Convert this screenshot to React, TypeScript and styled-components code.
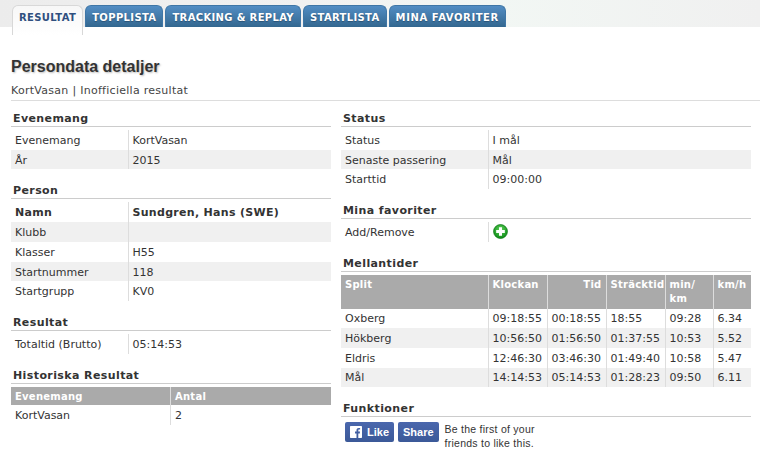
import React from "react";
import styled, { createGlobalStyle } from "styled-components";

const GlobalStyle = createGlobalStyle`
  html, body {
    margin: 0;
    padding: 0;
    background: #fff;
  }
  body {
    width: 760px;
    height: 453px;
    overflow: hidden;
    font-family: "DejaVu Sans", Verdana, sans-serif;
    font-size: 11px;
    color: #333;
  }
`;

const tabs = [
  { label: "Resultat", spacing: 0.35 },
  { label: "Topplista", spacing: 0.35 },
  { label: "Tracking & Replay", spacing: 0.35 },
  { label: "Startlista", spacing: 0.35 },
  { label: "Mina favoriter", spacing: 0.6 },
];

const splits = [
  ["Oxberg", "09:18:55", "00:18:55", "18:55", "09:28", "6.34"],
  ["Hökberg", "10:56:50", "01:56:50", "01:37:55", "10:53", "5.52"],
  ["Eldris", "12:46:30", "03:46:30", "01:49:40", "10:58", "5.47"],
  ["Mål", "14:14:53", "05:14:53", "01:28:23", "09:50", "6.11"],
];

const InfoTable = ({
  rows,
  bold,
  wide,
  short,
}: {
  rows: [string, React.ReactNode][];
  bold?: string;
  wide?: boolean;
  short?: number;
}) => (
  <Info $wide={wide}>
    <tbody>
      {rows.map(([label, value], i) => (
        <InfoRow key={label} $bold={label === bold} $short={i === short}>
          <td>{label}</td>
          <td>{value}</td>
        </InfoRow>
      ))}
    </tbody>
  </Info>
);

const App = () => {
  return (
    <>
      <GlobalStyle />
      <TabBar>
        {tabs.map((t, i) => (
          <Tab key={t.label} $active={i === 0} $spacing={t.spacing}>
            {t.label}
          </Tab>
        ))}
      </TabBar>
      <Header>
        <Title>Persondata detaljer</Title>
        <Crumb>KortVasan | Inofficiella resultat</Crumb>
      </Header>
      <Columns>
        <Column>
          <Section>
            <SectionTitle>Evenemang</SectionTitle>
            <InfoTable
              short={1}
              rows={[
                ["Evenemang", "KortVasan"],
                ["År", "2015"],
              ]}
            />
          </Section>
          <Section>
            <SectionTitle>Person</SectionTitle>
            <InfoTable
              bold="Namn"
              short={3}
              rows={[
                ["Namn", "Sundgren, Hans (SWE)"],
                ["Klubb", ""],
                ["Klasser", "H55"],
                ["Startnummer", "118"],
                ["Startgrupp", "KV0"],
              ]}
            />
          </Section>
          <Section>
            <SectionTitle>Resultat</SectionTitle>
            <InfoTable rows={[["Totaltid (Brutto)", "05:14:53"]]} />
          </Section>
          <Section>
            <SectionTitle>Historiska Resultat</SectionTitle>
            <History>
              <thead>
                <tr>
                  <th>Evenemang</th>
                  <th>Antal</th>
                </tr>
              </thead>
              <tbody>
                <tr>
                  <td>KortVasan</td>
                  <td>2</td>
                </tr>
              </tbody>
            </History>
          </Section>
        </Column>
        <Column $wide>
          <Section>
            <SectionTitle>Status</SectionTitle>
            <InfoTable
              wide
              short={1}
              rows={[
                ["Status", "I mål"],
                ["Senaste passering", "Mål"],
                ["Starttid", "09:00:00"],
              ]}
            />
          </Section>
          <Section>
            <SectionTitle>Mina favoriter</SectionTitle>
            <InfoTable
              wide
              rows={[
                [
                  "Add/Remove",
                  <PlusIcon viewBox="0 0 16 16" aria-label="Add">
                    <defs>
                      <radialGradient id="plusFill" cx="50%" cy="35%" r="65%">
                        <stop offset="0%" stopColor="#5fd35a" />
                        <stop offset="100%" stopColor="#0d8a17" />
                      </radialGradient>
                    </defs>
                    <circle cx="8" cy="8" r="7.4" fill="url(#plusFill)" stroke="#0b7a14" strokeWidth="0.8" />
                    <path d="M6.400 3.400h3.200v3h3v3.200h-3v3H6.400v-3h-3V6.400h3z" fill="#fff" />
                  </PlusIcon>,
                ],
              ]}
            />
          </Section>
          <Section>
            <SectionTitle>Mellantider</SectionTitle>
            <Splits>
              <thead>
                <tr>
                  <th>Split</th>
                  <th>Klockan</th>
                  <RightHead>Tid</RightHead>
                  <th>Sträcktid</th>
                  <th>
                    min/
                    <br />
                    km
                  </th>
                  <th>km/h</th>
                </tr>
              </thead>
              <tbody>
                {splits.map((row) => (
                  <tr key={row[0]}>
                    {row.map((cell, i) => (
                      <td key={i}>{cell}</td>
                    ))}
                  </tr>
                ))}
              </tbody>
            </Splits>
          </Section>
          <Section>
            <SectionTitle>Funktioner</SectionTitle>
            <Social>
              <FbButton>
                <svg width="12" height="12" viewBox="0 0 12 12" aria-hidden="true">
                  <path
                    d="M.7 0h10.600a.7.7 0 0 1 .7.7v10.600a.7.7 0 0 1-.7.7H8.300V7.400h1.500l.2-1.800H8.300V4.500c0-.5.2-.9.9-.9h.9V2c-.2 0-.7-.1-1.300-.1-1.400 0-2.300.8-2.300 2.400v1.300H5v1.800h1.500V12H.7a.7.7 0 0 1-.7-.7V.7A.7.7 0 0 1 .7 0z"
                    fill="#fff"
                  />
                </svg>
                Like
              </FbButton>
              <FbButton>Share</FbButton>
              <FbText>
                Be the first of your
                <br />
                friends to like this.
              </FbText>
            </Social>
          </Section>
        </Column>
      </Columns>
    </>
  );
};

export default App;

const TabBar = styled.div`
  height: 27px;
  box-sizing: border-box;
  padding: 5px 0 0 12px;
  display: flex;
  gap: 2px;
  background: linear-gradient(90deg, #ececec 0%, #f1f1f1 40%, #f2f7f4 65%, #f0f0f0 100%);
`;

const Tab = styled.div<{ $active?: boolean; $spacing: number }>`
  box-sizing: border-box;
  height: ${(p) => (p.$active ? "30px" : "22px")};
  padding: 0 6px;
  line-height: 23px;
  font-size: 10px;
  font-weight: bold;
  text-transform: uppercase;
  letter-spacing: ${(p) => p.$spacing}px;
  border-radius: 6px 6px 0 0;
  color: ${(p) => (p.$active ? "#2f4f7f" : "#fff")};
  background: ${(p) =>
    p.$active ? "linear-gradient(#f7f7f7, #fff)" : "linear-gradient(#528dc4, #33678f)"};
  border: 1px solid ${(p) => (p.$active ? "#d8d8d8" : "#3f76a6")};
  border-bottom: 0;
  text-shadow: ${(p) => (p.$active ? "none" : "0 1px 1px #2a5275")};
`;

const Header = styled.div`
  margin: 31px 0 0 11px;
  padding-bottom: 1px;
  border-bottom: 1px solid #ddd;
`;

const Title = styled.h1`
  margin: 0;
  height: 20px;
  font-family: "Liberation Sans", Arial, sans-serif;
  font-size: 16px;
  line-height: 18px;
  font-weight: bold;
  color: #333;
  text-shadow: 1px 1px 2px #bbb;
`;

const Crumb = styled.div`
  margin-top: 5px;
  line-height: 16px;
  letter-spacing: 0.28px;
  color: #444;
`;

const Columns = styled.div`
  display: flex;
  gap: 10px;
  padding: 9px 9px 0 11px;
`;

const Column = styled.div<{ $wide?: boolean }>`
  width: ${(p) => (p.$wide ? "410px" : "320px")};
  flex: none;
`;

const Section = styled.section`
  margin-bottom: 13px;
`;

const SectionTitle = styled.h3`
  margin: 0 0 3px;
  padding: 1px 0 0 2px;
  height: 15px;
  line-height: 15px;
  font-size: 11px;
  font-weight: bold;
  letter-spacing: 0.4px;
  color: #333;
  border-bottom: 1px solid #ccc;
`;

const Info = styled.table<{ $wide?: boolean }>`
  width: 100%;
  border-collapse: collapse;
  td {
    padding: 1px 4px 0;
    box-sizing: border-box;
  }
  td:first-child {
    width: ${(p) => (p.$wide ? "147px" : "117px")};
    border-right: 1px solid #ddd;
  }
  tr:nth-child(even) {
    background: #f0f0f0;
  }
`;

const InfoRow = styled.tr<{ $bold?: boolean; $short?: boolean }>`
  font-weight: ${(p) => (p.$bold ? "bold" : "normal")};
  letter-spacing: ${(p) => (p.$bold ? "0.3px" : "0")};
  td {
    height: ${(p) => (p.$short ? "19px" : "20px")};
  }
`;

const History = styled.table`
  width: 100%;
  border-collapse: collapse;
  th {
    background: #aaa;
    color: #fff;
    text-align: left;
    height: 18px;
    padding: 0 4px;
    font-size: 10px;
    letter-spacing: 0.25px;
  }
  th:first-child,
  td:first-child {
    width: 151px;
    border-right: 1px solid #ddd;
  }
  td {
    height: 20px;
    padding: 1px 4px 0;
    box-sizing: border-box;
  }
`;

const Splits = styled.table`
  width: 100%;
  border-collapse: collapse;
  table-layout: fixed;
  th {
    background: #aaa;
    color: #fff;
    text-align: left;
    vertical-align: top;
    padding: 3px 4px;
    height: 33px;
    box-sizing: border-box;
    font-size: 10px;
    letter-spacing: 0.25px;
    line-height: 14px;
    border-right: 1px solid #ddd;
  }
  th:nth-child(1) { width: 147px; }
  th:nth-child(2) { width: 59px; }
  th:nth-child(3) { width: 59px; }
  th:nth-child(4) { width: 59px; }
  th:nth-child(5) { width: 48px; }
  th:last-child,
  td:last-child {
    border-right: 0;
  }
  td {
    height: 20px;
    padding: 0 4px;
    box-sizing: border-box;
    border-right: 1px solid #ddd;
    white-space: nowrap;
  }
  tbody tr:nth-child(1) td,
  tbody tr:nth-child(4) td {
    height: 19px;
  }
  tbody tr:nth-child(even) {
    background: #f0f0f0;
  }
`;

const RightHead = styled.th`
  && {
    text-align: right;
  }
`;

const PlusIcon = styled.svg`
  display: block;
  width: 15px;
  height: 15px;
  margin: -2px 0 0 0;
`;

const Social = styled.div`
  display: flex;
  align-items: flex-start;
  gap: 4px;
  padding: 2px 0 0 4px;
`;

const FbButton = styled.div`
  display: flex;
  align-items: center;
  gap: 5px;
  height: 20px;
  padding: 0 5px;
  border-radius: 2px;
  background: linear-gradient(#4a67ad, #3b5998);
  color: #fff;
  font-family: "Liberation Sans", Arial, sans-serif;
  font-size: 11px;
  font-weight: bold;
`;

const FbText = styled.div`
  margin-left: 2px;
  font-family: "Liberation Sans", Arial, sans-serif;
  font-size: 10.500px;
  line-height: 14px;
  letter-spacing: 0.25px;
  color: #333;
`;
